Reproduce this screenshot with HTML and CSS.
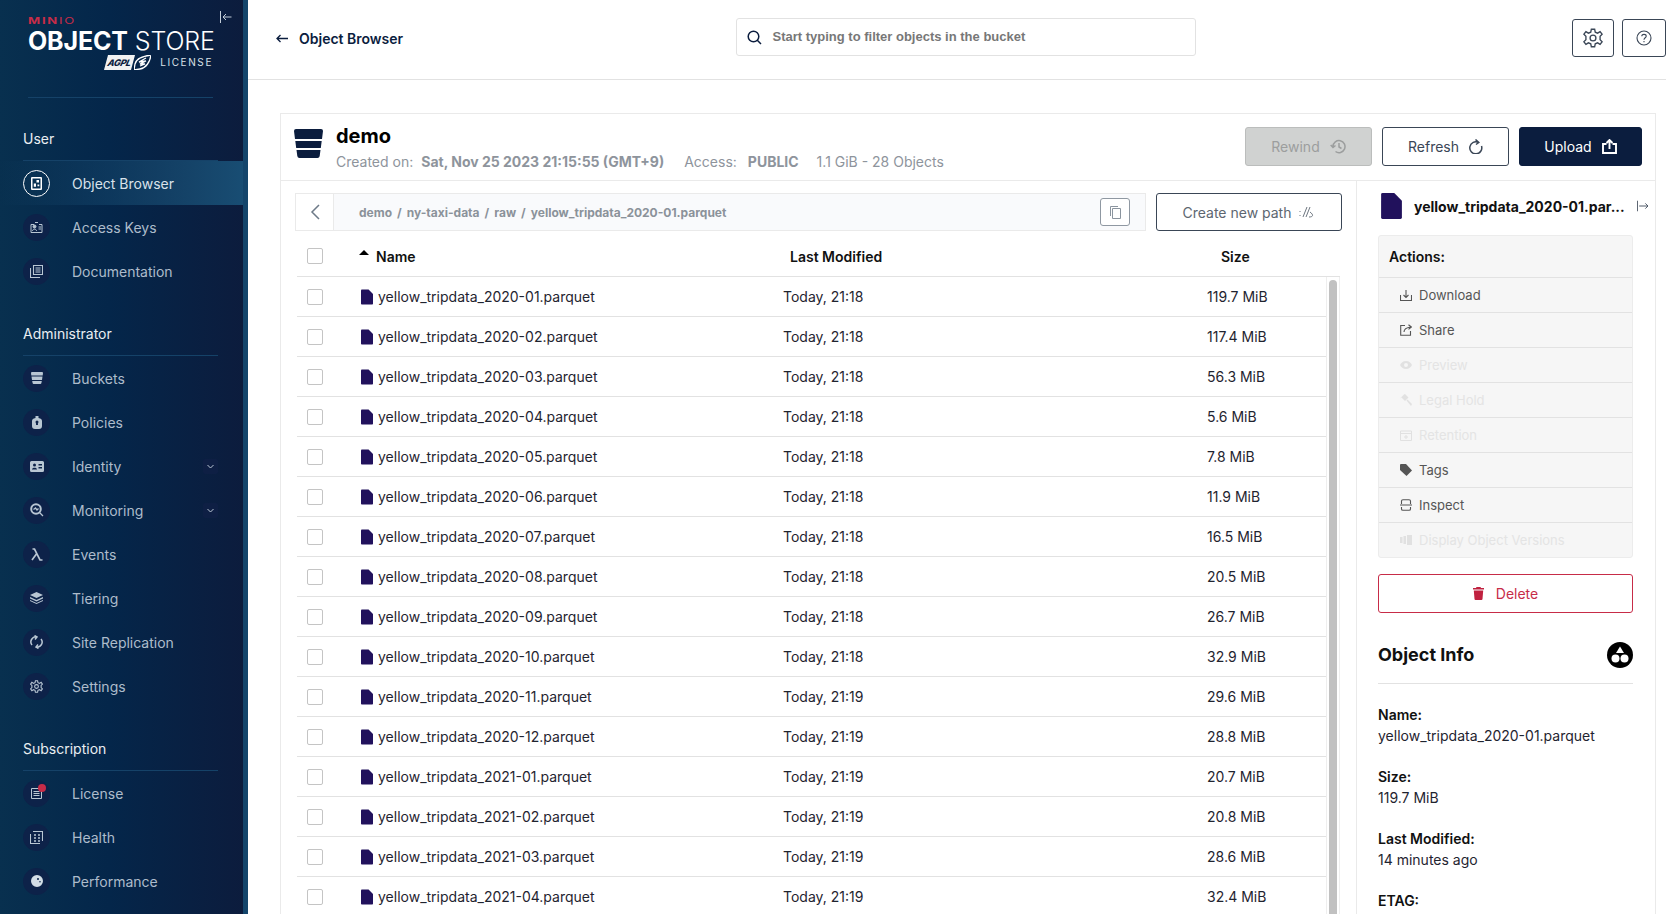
FILE: index.html
```html
<!DOCTYPE html>
<html>
<head>
    <title>Object Browser</title>
    <link rel="stylesheet" href="styles.css">
</head>
<body>
    <svg class="defs" width="0" height="0">
        <symbol id="file" viewBox="0 0 12 15"><path d="M0 .8Q0 0 .8 0H7.6L12 4.4V14.2Q12 15 11.2 15H.8Q0 15 0 14.2Z"/></symbol>
    </svg>

    <aside class="sidebar">
        <div class="logo">
            <div class="logo-minio"><b>MIN</b>IO</div>
            <div class="logo-name"><b>OBJECT</b> STORE</div>
            <div class="logo-license">
                <span class="agpl">AGPL</span>
                <svg class="wing" width="17" height="15" viewBox="0 0 17 15"><path d="M17 0C9 1 2 4 1 9l-1 6 6-1c6-1 10-7 11-14ZM12 3 5 7l7-1-6 3 5 0-5 2" fill="none" stroke="#fff" stroke-width="1.300"/></svg>
                <span>LICENSE</span>
            </div>
        </div>
        <svg class="collapse" width="12" height="12" viewBox="0 0 12 12" fill="none" stroke="#c3cdd8" stroke-width="1"><path d="M.5 0V12M11.5 6H3M6 3 3 6l3 3"/></svg>

        <div class="nav-title">User</div>
        <a class="nav-item active">
            <span class="nav-icon"><svg width="11" height="13" viewBox="0 0 11 13"><path fill="#fff" fill-rule="evenodd" d="M1 0H10Q11 0 11 1V12Q11 13 10 13H1Q0 13 0 12V1Q0 0 1 0ZM1.500 1.500V11.500H9.500V1.500ZM5.500 3H8V5.500H5.500ZM2.800 6.500H5V9.800H2.800ZM6.500 7.500H8.300V9.300H6.500Z"/></svg></span>
            Object Browser
        </a>
        <a class="nav-item">
            <span class="nav-icon"><svg width="13" height="11" viewBox="0 0 13 11" fill="none" stroke="#b9c6d3"><path d="M1 2.500H4M9 2.500H12V10.500H1V2.500M8.500 5H11M8.500 7H11M2.500 9C2.500 6.500 6.500 6.500 6.500 9"/><circle cx="4.500" cy="4.500" r="1.500" fill="#b9c6d3"/><path d="M5 .5H8"/></svg></span>
            Access Keys
        </a>
        <a class="nav-item">
            <span class="nav-icon"><svg width="13" height="13" viewBox="0 0 13 13" fill="none" stroke="#b9c6d3"><path d="M3.500 .5H12.500V9.500H3.500ZM.5 3V12.500H10M5.500 3H10.500M5.500 5H10.500M5.500 7H10.500" stroke-width="1.100"/></svg></span>
            Documentation
        </a>

        <div class="nav-title">Administrator</div>
        <a class="nav-item">
            <span class="nav-icon"><svg width="12" height="12" viewBox="0 0 12 12" fill="#b9c6d3"><path d="M1 0H11Q12 0 12 1L11.700 3.500H.3L0 1Q0 0 1 0ZM.5 4.500H11.500L11 8H1ZM1.200 9H10.800L10.400 11Q10.200 12 9.400 12H2.600Q1.800 12 1.600 11Z"/></svg></span>
            Buckets
        </a>
        <a class="nav-item">
            <span class="nav-icon"><svg width="10" height="13" viewBox="0 0 10 13"><path fill="#b9c6d3" fill-rule="evenodd" d="M3.500 0H6.500V2Q10 2.500 10 5V10Q10 13 7 13H3Q0 13 0 10V5Q0 2.500 3.500 2ZM5 4.500A1.500 1.500 0 0 0 3.500 6C3.500 7 4.500 7 4 9H6C5.500 7 6.500 7 6.500 6A1.500 1.500 0 0 0 5 4.500Z"/></svg></span>
            Policies
        </a>
        <a class="nav-item">
            <span class="nav-icon"><svg width="14" height="11" viewBox="0 0 14 11"><path fill="#b9c6d3" fill-rule="evenodd" d="M1.500 0H12.500Q14 0 14 1.500V9.500Q14 11 12.500 11H1.500Q0 11 0 9.500V1.500Q0 0 1.500 0ZM4.500 2.500A1.500 1.500 0 1 0 4.500 5.500 1.500 1.500 0 1 0 4.500 2.500ZM2 8.500H7C7 6 2 6 2 8.500ZM8.500 3V4.500H12V3ZM8.500 6V7.500H12V6Z"/></svg></span>
            Identity
            <span class="nav-arrow"><svg width="7" height="5" viewBox="0 0 7 5" fill="none" stroke="#b9c6d3" stroke-width="1"><path d="M.5 1 3.500 4 6.500 1"/></svg></span>
        </a>
        <a class="nav-item">
            <span class="nav-icon"><svg width="14" height="14" viewBox="0 0 14 14" fill="none" stroke="#b9c6d3" stroke-width="2"><circle cx="6" cy="6" r="4.800"/><path d="M9.500 9.500 13 13M3.500 6.500 5.500 5 7 7 8.500 5.500" stroke-width="1.300"/></svg></span>
            Monitoring
            <span class="nav-arrow"><svg width="7" height="5" viewBox="0 0 7 5" fill="none" stroke="#b9c6d3" stroke-width="1"><path d="M.5 1 3.500 4 6.500 1"/></svg></span>
        </a>
        <a class="nav-item">
            <span class="nav-icon"><svg width="12" height="13" viewBox="0 0 12 13" fill="none" stroke="#b9c6d3" stroke-width="1.700"><path d="M1.500 1H3.500L9 12H11.500M5.800 5.500 1 12"/></svg></span>
            Events
        </a>
        <a class="nav-item">
            <span class="nav-icon"><svg width="13" height="12" viewBox="0 0 13 12" fill="#b9c6d3"><path d="M6.500 0 13 3 6.500 6 0 3ZM0 5 6.500 8 13 5V6.500L6.500 9.500 0 6.500ZM0 8 6.500 11 13 8V9L6.500 12 0 9Z"/></svg></span>
            Tiering
        </a>
        <a class="nav-item">
            <span class="nav-icon"><svg width="13" height="14" viewBox="0 0 13 14" fill="none" stroke="#b9c6d3" stroke-width="1.500"><path d="M2 10A5 5 0 0 1 7 2M4.500 .5 7 2 5 4.500M11 4A5 5 0 0 1 6 12M8.500 13.500 6 12 8 9.500"/></svg></span>
            Site Replication
        </a>
        <a class="nav-item">
            <span class="nav-icon"><svg width="13" height="13" viewBox="0 0 24 24" fill="none" stroke="#b9c6d3" stroke-width="2"><circle cx="12" cy="12" r="3.500"/><path d="M10 1.500H14L14.700 5 17.500 6.200 20.500 4.300 23 7.500 20.500 10 20.500 14 23 16.500 20.500 19.700 17.500 17.800 14.700 19 14 22.500H10L9.300 19 6.500 17.800 3.500 19.700 1 16.500 3.500 14V10L1 7.500 3.500 4.300 6.500 6.200 9.300 5Z"/></svg></span>
            Settings
        </a>

        <div class="nav-title">Subscription</div>
        <a class="nav-item">
            <span class="nav-icon"><svg width="11" height="11" viewBox="0 0 11 11" fill="none" stroke="#b9c6d3" stroke-width="1"><path d="M.5 .5H10.500V10.500H.5ZM2.500 3.500H8.500M2.500 5.500H8.500M2.500 7.500H8.500"/></svg><i class="dot"></i></span>
            License
        </a>
        <a class="nav-item">
            <span class="nav-icon"><svg width="13" height="13" viewBox="0 0 13 13" fill="none" stroke="#b9c6d3" stroke-width="1.100"><path d="M.5 3V12.500H10M3 .5H12.500V10"/><path d="M4 4H6M8 4H10M4 7H6M8 7H10M4 10H6M8 10H10" stroke-width="1.500"/></svg></span>
            Health
        </a>
        <a class="nav-item">
            <span class="nav-icon"><svg width="12" height="12" viewBox="0 0 12 12"><path fill="#d3dde6" fill-rule="evenodd" d="M6 0A6 6 0 1 1 6 12 6 6 0 1 1 6 0ZM7 3A1 1 0 1 0 7 5 1 1 0 1 0 7 3ZM9 6A.8.8 0 1 0 9 7.600.8.8 0 1 0 9 6Z"/></svg></span>
            Performance
        </a>
    </aside>

    <main class="main">
        <header class="topbar">
            <a class="crumb">
                <svg width="12" height="9" viewBox="0 0 12 9" fill="none" stroke="#0b1d3e" stroke-width="1.300"><path d="M12 4.500H1M4.500 1 1 4.500 4.500 8"/></svg>
                Object Browser
            </a>
            <div class="search">
                <svg width="15" height="15" viewBox="0 0 15 15" fill="none" stroke="#0b1d3e" stroke-width="1.500"><circle cx="6.500" cy="6.500" r="5.300"/><path d="M10.300 10.300 14 14"/></svg>
                <span>Start typing to filter objects in the bucket</span>
            </div>
            <div class="top-buttons">
                <button class="icon-btn"><svg width="20" height="20" viewBox="0 0 24 24" fill="none" stroke="#3a4656" stroke-width="1.600"><circle cx="12" cy="12" r="3.500"/><path d="M10 1.500H14L14.700 5 17.500 6.200 20.500 4.300 23 7.500 20.500 10 20.500 14 23 16.500 20.500 19.700 17.500 17.800 14.700 19 14 22.500H10L9.300 19 6.500 17.800 3.500 19.700 1 16.500 3.500 14V10L1 7.500 3.500 4.300 6.500 6.200 9.300 5Z"/></svg></button>
                <button class="icon-btn"><svg width="16" height="16" viewBox="0 0 16 16" fill="none" stroke="#3a4656" stroke-width="1.100"><circle cx="8" cy="8" r="7"/><path d="M5.800 6.200C5.800 3.700 10.200 3.700 10.200 6.200 10.200 7.800 8 7.800 8 9.800M8 11V12.200"/></svg></button>
            </div>
        </header>

        <section class="card">
            <div class="card-head">
                <svg class="bucket" width="29" height="29" viewBox="0 0 29 29"><path fill="#0b1d3e" d="M2 0H27Q29 0 29 2L28 10H1L0 2Q0 0 2 0ZM1.300 12H27.700L26.800 19H2.200ZM2.500 21H26.500L25.700 27Q25.400 29 23.500 29H5.500Q3.600 29 3.300 27Z"/></svg>
                <div class="bucket-info">
                    <h1>demo</h1>
                    <p>Created on:<b class="created">Sat, Nov 25 2023 21:15:55 (GMT+9)</b><span class="access">Access:</span><b class="public">PUBLIC</b><span>1.1 GiB - 28 Objects</span></p>
                </div>
                <div class="head-buttons">
                    <button class="btn disabled">Rewind
                        <svg width="16" height="15" viewBox="0 0 16 15" fill="none" stroke="#9c9e9e" stroke-width="1.500"><path d="M3 7.500A6 6 0 1 1 5.500 12.500M.7 6 3 8.500 5.500 6.500M9 4V8L11.500 9.500"/></svg>
                    </button>
                    <button class="btn">Refresh
                        <svg width="14" height="15" viewBox="0 0 14 15" fill="none" stroke="#3a4656" stroke-width="1.500"><path d="M9.500 3.500A6 6 0 1 0 12.500 7M6.500 .5 9.800 3.500 7 5.500"/></svg>
                    </button>
                    <button class="btn primary">Upload
                        <svg width="15" height="15" viewBox="0 0 15 15" fill="none" stroke="#fff" stroke-width="1.900"><path d="M4.500 5H1V14H14V5H10.500M7.500 10V1.500M4.500 4 7.500 1 10.500 4"/></svg>
                    </button>
                </div>
            </div>

            <div class="card-body">
                <div class="list">
                    <div class="path-row">
                        <div class="path">
                            <span class="path-back"><svg width="10" height="16" viewBox="0 0 10 16" fill="none" stroke="#6d7a88" stroke-width="1.500"><path d="M9 1 2 8 9 15"/></svg></span>
                            <span class="path-text">demo<i>/</i>ny-taxi-data<i>/</i>raw<i>/</i>yellow_tripdata_2020-01.parquet</span>
                            <button class="copy"><svg width="11" height="13" viewBox="0 0 11 13" fill="none" stroke="#8a949e"><path d="M2.500 2.500H10.500V12.500H2.500ZM.5 10V.5H8"/></svg></button>
                        </div>
                        <button class="btn new-path">Create new path
                            <svg width="16" height="12" viewBox="0 0 16 12" fill="none" stroke="#6d7680"><path d="M1 9V10M1 5V6M4 11 8 1M7 11 11 1M10 11C14 11 15 9 11 6"/></svg>
                        </button>
                    </div>

                    <div class="list-head">
                        <span class="check"></span>
                        <span class="col-name"><i class="sort"></i>Name</span>
                        <span class="col-date">Last Modified</span>
                        <span class="col-size">Size</span>
                    </div>

                    <div class="rows-wrap">
                        <div class="rows">
                            <div class="row"><span class="check"></span><span class="cell-name"><svg class="file"><use href="#file"/></svg>yellow_tripdata_2020-01.parquet</span><span class="cell-date">Today, 21:18</span><span class="cell-size">119.7 MiB</span></div>
                            <div class="row"><span class="check"></span><span class="cell-name"><svg class="file"><use href="#file"/></svg>yellow_tripdata_2020-02.parquet</span><span class="cell-date">Today, 21:18</span><span class="cell-size">117.4 MiB</span></div>
                            <div class="row"><span class="check"></span><span class="cell-name"><svg class="file"><use href="#file"/></svg>yellow_tripdata_2020-03.parquet</span><span class="cell-date">Today, 21:18</span><span class="cell-size">56.3 MiB</span></div>
                            <div class="row"><span class="check"></span><span class="cell-name"><svg class="file"><use href="#file"/></svg>yellow_tripdata_2020-04.parquet</span><span class="cell-date">Today, 21:18</span><span class="cell-size">5.6 MiB</span></div>
                            <div class="row"><span class="check"></span><span class="cell-name"><svg class="file"><use href="#file"/></svg>yellow_tripdata_2020-05.parquet</span><span class="cell-date">Today, 21:18</span><span class="cell-size">7.8 MiB</span></div>
                            <div class="row"><span class="check"></span><span class="cell-name"><svg class="file"><use href="#file"/></svg>yellow_tripdata_2020-06.parquet</span><span class="cell-date">Today, 21:18</span><span class="cell-size">11.9 MiB</span></div>
                            <div class="row"><span class="check"></span><span class="cell-name"><svg class="file"><use href="#file"/></svg>yellow_tripdata_2020-07.parquet</span><span class="cell-date">Today, 21:18</span><span class="cell-size">16.5 MiB</span></div>
                            <div class="row"><span class="check"></span><span class="cell-name"><svg class="file"><use href="#file"/></svg>yellow_tripdata_2020-08.parquet</span><span class="cell-date">Today, 21:18</span><span class="cell-size">20.5 MiB</span></div>
                            <div class="row"><span class="check"></span><span class="cell-name"><svg class="file"><use href="#file"/></svg>yellow_tripdata_2020-09.parquet</span><span class="cell-date">Today, 21:18</span><span class="cell-size">26.7 MiB</span></div>
                            <div class="row"><span class="check"></span><span class="cell-name"><svg class="file"><use href="#file"/></svg>yellow_tripdata_2020-10.parquet</span><span class="cell-date">Today, 21:18</span><span class="cell-size">32.9 MiB</span></div>
                            <div class="row"><span class="check"></span><span class="cell-name"><svg class="file"><use href="#file"/></svg>yellow_tripdata_2020-11.parquet</span><span class="cell-date">Today, 21:19</span><span class="cell-size">29.6 MiB</span></div>
                            <div class="row"><span class="check"></span><span class="cell-name"><svg class="file"><use href="#file"/></svg>yellow_tripdata_2020-12.parquet</span><span class="cell-date">Today, 21:19</span><span class="cell-size">28.8 MiB</span></div>
                            <div class="row"><span class="check"></span><span class="cell-name"><svg class="file"><use href="#file"/></svg>yellow_tripdata_2021-01.parquet</span><span class="cell-date">Today, 21:19</span><span class="cell-size">20.7 MiB</span></div>
                            <div class="row"><span class="check"></span><span class="cell-name"><svg class="file"><use href="#file"/></svg>yellow_tripdata_2021-02.parquet</span><span class="cell-date">Today, 21:19</span><span class="cell-size">20.8 MiB</span></div>
                            <div class="row"><span class="check"></span><span class="cell-name"><svg class="file"><use href="#file"/></svg>yellow_tripdata_2021-03.parquet</span><span class="cell-date">Today, 21:19</span><span class="cell-size">28.6 MiB</span></div>
                            <div class="row"><span class="check"></span><span class="cell-name"><svg class="file"><use href="#file"/></svg>yellow_tripdata_2021-04.parquet</span><span class="cell-date">Today, 21:19</span><span class="cell-size">32.4 MiB</span></div>
                        </div>
                        <div class="scrollbar"><div class="thumb"></div></div>
                    </div>
                </div>

                <aside class="detail">
                    <div class="detail-head">
                        <svg class="detail-file"><use href="#file"/></svg>
                        <strong>yellow_tripdata_2020-01.par...</strong>
                        <svg width="14" height="12" viewBox="0 0 14 12" fill="none" stroke="#3a4656"><path d="M.5 0V12M2.500 6H12.500M9.500 3 12.500 6 9.500 9"/></svg>
                    </div>

                    <div class="actions">
                        <div class="actions-title">Actions:</div>
                        <div class="action"><svg width="12" height="12" viewBox="0 0 12 12" fill="none" stroke="#555" stroke-width="1.100"><path d="M.5 6V11.500H11.500V6M6 1V8.500M3.500 6 6 8.500 8.500 6"/></svg>Download</div>
                        <div class="action"><svg width="12" height="12" viewBox="0 0 12 12" fill="none" stroke="#555" stroke-width="1.100"><path d="M5 1.500H.7V11.300H10.500V7M4 8C4 5 6 3.500 11 3M8.500 .7 11.300 3 8.500 5.300"/></svg>Share</div>
                        <div class="action off"><svg width="12" height="8" viewBox="0 0 12 8"><path fill-rule="evenodd" fill="#555" d="M6 0C9 0 11 2 12 4 11 6 9 8 6 8S1 6 0 4C1 2 3 0 6 0ZM6 2A2 2 0 1 0 6 6 2 2 0 1 0 6 2Z"/></svg>Preview</div>
                        <div class="action off"><svg width="12" height="12" viewBox="0 0 12 12" fill="#555"><path d="M5 0 8.500 3.500 5 7 1.500 3.500 0 4.500 4 .5ZM6.500 6.500 7.500 5.500 12 10 11 12Z"/></svg>Legal Hold</div>
                        <div class="action off"><svg width="12" height="12" viewBox="0 0 12 12" fill="none" stroke="#555"><path d="M.5 2H11.500V11.500H.5ZM.5 4.500H11.500M6 6V10M4 8H8"/></svg>Retention</div>
                        <div class="action"><svg width="12" height="12" viewBox="0 0 12 12" fill="#555"><path d="M.5 0H6L12 6.500 6.500 12 0 6V.5Z"/></svg>Tags</div>
                        <div class="action"><svg width="12" height="12" viewBox="0 0 12 12" fill="none" stroke="#555" stroke-width="1.100"><path d="M1.500 5V2Q1.500 .7 3 .7H9Q10.500 .7 10.500 2V5M0 6H12M1.500 8V10Q1.500 11.300 3 11.300H9Q10.500 11.300 10.500 10V8"/></svg>Inspect</div>
                        <div class="action off"><svg width="12" height="10" viewBox="0 0 12 10" fill="#555"><path d="M7 0H12V10H7ZM3.500 1H6V9H3.500ZM0 2H2.500V8H0Z"/></svg>Display Object Versions</div>
                    </div>

                    <button class="delete">
                        <svg width="11" height="13" viewBox="0 0 11 13" fill="#c0213f"><path d="M3.500 0H7.500L8 1H11V2.500H0V1H3ZM.8 3.500H10.200L9.500 12Q9.400 13 8.500 13H2.500Q1.600 13 1.500 12Z"/></svg>
                        Delete
                    </button>

                    <div class="info-head">
                        <h2>Object Info</h2>
                        <svg width="26" height="26" viewBox="0 0 26 26"><circle cx="13" cy="13" r="13" fill="#000"/><path d="M13 4.500 17 11H9Z" fill="#fff"/><circle cx="8.500" cy="16.500" r="4" fill="#fff"/><circle cx="17.500" cy="16.500" r="4" fill="#fff"/></svg>
                    </div>
                    <dl class="info">
                        <dt>Name:</dt>
                        <dd>yellow_tripdata_2020-01.parquet</dd>
                        <dt>Size:</dt>
                        <dd>119.7 MiB</dd>
                        <dt>Last Modified:</dt>
                        <dd>14 minutes ago</dd>
                        <dt>ETAG:</dt>
                    </dl>
                </aside>
            </div>
        </section>
    </main>
</body>
</html>
```

FILE: styles.css
```css
* {
    margin: 0;
    padding: 0;
    box-sizing: border-box;
}

html, body {
    height: 914px;
    overflow: hidden;
}

body {
    display: flex;
    font-family: Inter, "Liberation Sans", sans-serif;
    font-size: 14px;
    color: #1f2430;
    background: #fff;
}

.defs {
    position: absolute;
}

button {
    font-family: inherit;
    background: none;
    cursor: pointer;
}

/* sidebar */
.sidebar {
    position: relative;
    flex: 0 0 248px;
    height: 914px;
    overflow: hidden;
    border-right: 5px solid #14456b;
    background: linear-gradient(90deg, #08304f 0%, #04264a 45%, #0c1c3d 100%);
}

.logo {
    height: 98px;
    padding: 17px 0 0 28px;
    color: #fff;
    position: relative;
}

.logo::after {
    content: "";
    position: absolute;
    left: 28px;
    right: 30px;
    bottom: 0;
    border-bottom: 1px solid #154268;
}

.logo-minio {
    font-size: 9px;
    line-height: 8px;
    letter-spacing: 1.2px;
    color: #c72c48;
    transform: scaleX(1.450);
    transform-origin: left;
}

.logo-name {
    font-size: 25px;
    line-height: 24px;
    margin-top: 4px;
    font-weight: 300;
    letter-spacing: -.15px;
    white-space: nowrap;
}

.logo-name b {
    font-weight: 700;
}

.logo-license {
    display: flex;
    align-items: center;
    justify-content: flex-end;
    width: 185px;
    margin-top: 2px;
    font-size: 10px;
    line-height: 15px;
    letter-spacing: 1.600px;
    color: #dbe2e8;
}

.agpl {
    font-size: 9px;
    font-weight: 800;
    font-style: italic;
    letter-spacing: -.3px;
    line-height: 15px;
    padding: 0 2px;
    color: #0c1c3d;
    background: #f2f2f2;
    transform: skewX(-15deg);
}

.wing {
    margin: 0 9px 0 1px;
}

.collapse {
    position: absolute;
    top: 11px;
    left: 220px;
}

.nav-title {
    height: 63px;
    margin: 0 25px 0 23px;
    padding-top: 31px;
    line-height: 20px;
    color: #e9eef2;
    border-bottom: 1px solid #154268;
}

.nav-item {
    display: flex;
    align-items: center;
    height: 44px;
    padding-left: 23px;
    color: #adbccb;
}

.nav-item.active {
    color: #d9e2ea;
    background: linear-gradient(90deg, rgba(24, 77, 115, 0) 0%, #184d73 100%);
}

.nav-icon {
    position: relative;
    display: flex;
    align-items: center;
    justify-content: center;
    flex: 0 0 27px;
    height: 27px;
    margin-right: 22px;
    border-radius: 50%;
    background: #0d2249;
}

.active .nav-icon {
    background: none;
    border: 1px solid #fff;
}

.dot {
    position: absolute;
    top: 4px;
    right: 4px;
    width: 8px;
    height: 8px;
    border-radius: 50%;
    background: #c72c48;
}

.nav-arrow {
    display: flex;
    align-items: center;
    justify-content: center;
    width: 15px;
    height: 15px;
    margin: 0 25px 0 auto;
    border-radius: 2px;
    background: #0e1f44;
}

/* top bar */
.main {
    flex: 1;
    min-width: 0;
    height: 914px;
    overflow: hidden;
}

.topbar {
    display: flex;
    align-items: center;
    height: 80px;
    padding: 0 0 4px 28px;
    border-bottom: 1px solid #e2e2e2;
}

.crumb {
    display: flex;
    align-items: center;
    gap: 11px;
    width: 462px;
    margin-top: 2px;
    font-weight: 600;
    color: #0b1d3e;
}

.search {
    display: flex;
    align-items: center;
    gap: 10px;
    width: 461px;
    height: 38px;
    padding-left: 10px;
    margin-bottom: 1px;
    border: 1px solid #e2e2e2;
    border-radius: 3px;
    font-family: "Liberation Sans", sans-serif;
    font-size: 13px;
    font-weight: 700;
    color: #777;
}

.search span {
    margin-top: -2px;
}

.top-buttons {
    display: flex;
    gap: 8px;
    margin-left: 376px;
    flex: 0 0 auto;
}

.icon-btn {
    display: flex;
    align-items: center;
    justify-content: center;
    width: 42px;
    height: 38px;
    border: 1px solid #3a4656;
    border-radius: 3px;
}

.icon-btn + .icon-btn {
    width: 44px;
}

/* card */
.card {
    width: 1376px;
    margin: 33px 0 0 32px;
    border: 1px solid #eaeaea;
    border-bottom: 0;
}

.card-head {
    display: flex;
    align-items: flex-start;
    height: 67px;
    padding: 15px 13px 0 13px;
    border-bottom: 1px solid #eaeaea;
}

.bucket {
    margin-right: 13px;
}

.bucket-info h1 {
    font-size: 20px;
    font-weight: 700;
    line-height: 24px;
    color: #000;
    margin-top: -5px;
}

.bucket-info p {
    margin-top: 5px;
    line-height: 18px;
    color: #8e949c;
    white-space: nowrap;
}

.bucket-info b {
    font-weight: 700;
}

.created {
    margin: 0 20px 0 8px;
}

.public {
    margin: 0 18px 0 11px;
}

.head-buttons {
    display: flex;
    gap: 10px;
    margin-left: auto;
    margin-top: -2px;
}

.btn {
    display: flex;
    align-items: center;
    justify-content: center;
    gap: 10px;
    width: 127px;
    height: 39px;
    border: 1px solid #3a4656;
    border-radius: 3px;
    font-size: 14px;
    color: #3a4656;
}

.btn.disabled {
    color: #9c9e9e;
    background: #d0d2d1;
    border-color: #bbbdbc;
}

.btn.primary {
    width: 123px;
    color: #fff;
    background: #0b1d3e;
    border-color: #0b1d3e;
}

.card-body {
    display: flex;
}

/* object list */
.list {
    width: 1075px;
    padding-top: 12px;
}

.path-row {
    display: flex;
    gap: 10px;
    margin-left: 14px;
    width: 1047px;
}

.path {
    display: flex;
    align-items: center;
    width: 851px;
    height: 38px;
    border: 1px solid #eaeaea;
    background: #f9fafc;
}

.path-back {
    display: flex;
    align-items: center;
    justify-content: center;
    width: 38px;
    height: 100%;
    background: #fff;
    border-right: 1px solid #eaeaea;
}

.path-text {
    flex: 1;
    padding-left: 25px;
    font-size: 12px;
    font-weight: 700;
    color: #8b929a;
}

.path-text i {
    font-style: normal;
    margin: 0 5px;
}

.copy {
    display: flex;
    align-items: center;
    justify-content: center;
    width: 30px;
    height: 28px;
    margin-right: 15px;
    border: 1px solid #8f98a2;
    border-radius: 3px;
    background: #fff;
}

.new-path {
    width: 186px;
    height: 38px;
    color: #5d6670;
    gap: 8px;
}

.list-head, .row {
    display: flex;
    align-items: center;
}

.list-head {
    height: 46px;
    padding-top: 5px;
    margin-left: 16px;
    width: 1043px;
    border-bottom: 1px solid #e2e2e2;
    font-weight: 600;
    color: #111;
}

.check {
    flex: 0 0 16px;
    height: 16px;
    margin-left: 10px;
    border: 1px solid #c4c4c4;
    border-radius: 2px;
    background: #fff;
}

.col-name {
    display: flex;
    align-items: center;
    width: 467px;
    padding-left: 36px;
}

.sort {
    width: 0;
    height: 0;
    margin: -7px 7px 0 0;
    border: 5px solid transparent;
    border-top: 0;
    border-bottom: 5px solid #000;
}

.col-date {
    width: 431px;
}

.rows-wrap {
    display: flex;
    margin-left: 16px;
    width: 1043px;
}

.rows {
    width: 1029px;
}

.row {
    height: 40px;
    border-bottom: 1px solid #e2e2e2;
}

.cell-name {
    display: flex;
    align-items: center;
    gap: 5px;
    width: 460px;
    padding-left: 38px;
}

.file {
    width: 12px;
    height: 16px;
    fill: #21115c;
}

.cell-date {
    width: 424px;
}

.scrollbar {
    flex: 1;
    padding: 3px 2px 0 2px;
    border-left: 1px solid #eee;
    border-right: 1px solid #eee;
}

.thumb {
    height: 640px;
    border-radius: 4px;
    background: #c1c1c1;
}

/* details panel */
.detail {
    flex: 1;
    min-width: 0;
    padding: 11px 22px 0 21px;
    border-left: 1px solid #eaeaea;
}

.detail-head {
    display: flex;
    align-items: center;
    height: 28px;
    gap: 12px;
    margin-right: -16px;
    margin-left: 3px;
}

.detail-head strong {
    font-weight: 700;
    color: #111;
    white-space: nowrap;
}

.detail-head strong + svg {
    margin-left: auto;
}

.detail-file {
    flex: 0 0 21px;
    height: 26px;
    fill: #21115c;
}

.actions {
    margin-top: 15px;
    border: 1px solid #ececec;
    border-radius: 3px;
    background: #f6f6f6;
}

.actions-title {
    height: 41px;
    line-height: 41px;
    padding-left: 10px;
    font-weight: 600;
    color: #111;
}

.action {
    display: flex;
    align-items: center;
    gap: 7px;
    height: 35px;
    padding-left: 21px;
    border-top: 1px solid #e2e2e2;
    font-size: 13px;
    color: #555;
}

.action.off {
    color: #e4e4e4;
}

.action.off svg {
    opacity: .12;
}

.delete {
    display: flex;
    align-items: center;
    justify-content: center;
    gap: 12px;
    width: 100%;
    height: 39px;
    margin-top: 16px;
    border: 1px solid #c72c48;
    border-radius: 3px;
    font-size: 14px;
    color: #c72c48;
}

.info-head {
    display: flex;
    align-items: center;
    justify-content: space-between;
    height: 71px;
    padding-top: 13px;
    border-bottom: 1px solid #e2e2e2;
}

.info-head h2 {
    font-size: 18px;
    font-weight: 700;
    color: #111;
}

.info {
    padding-top: 21px;
}

.info dt {
    line-height: 20px;
    font-weight: 600;
    color: #111;
}

.info dd {
    line-height: 21px;
    margin-bottom: 21px;
}
```
